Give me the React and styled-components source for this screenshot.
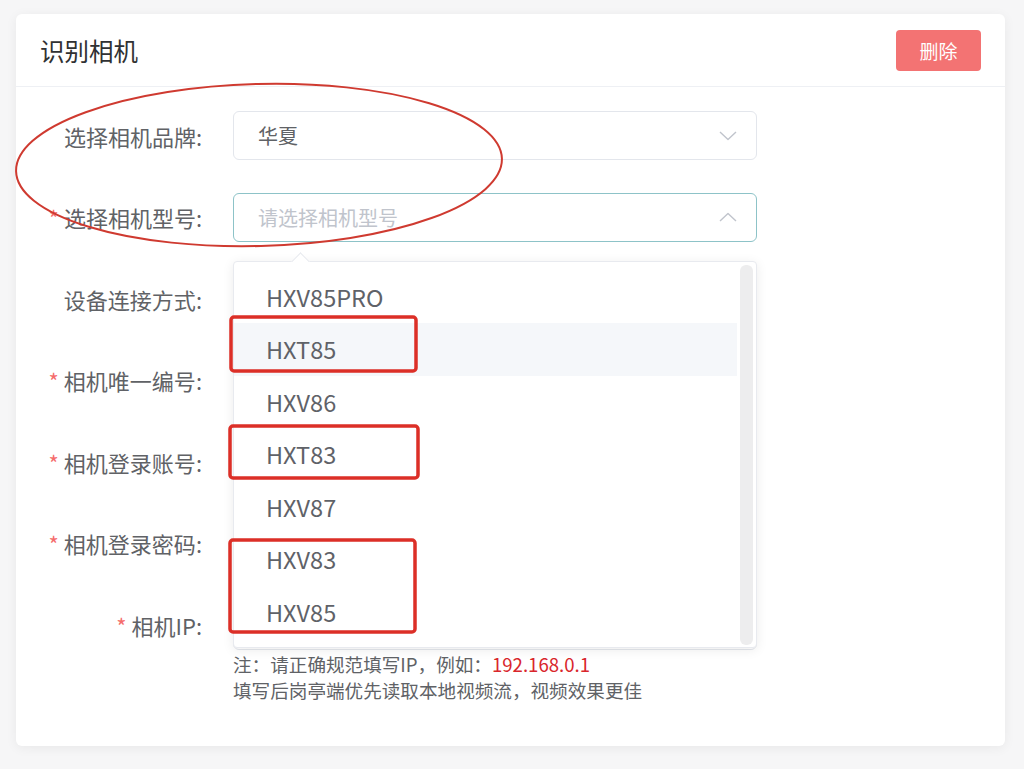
import styled, { createGlobalStyle } from "styled-components";

const GlobalStyle = createGlobalStyle`
  html, body {
    margin: 0;
    padding: 0;
    background: #f6f6f7;
  }
  body {
    font-family: "Noto Sans CJK SC", "Noto Sans", sans-serif;
  }
`;

const models = ["HXV85PRO", "HXT85", "HXV86", "HXT83", "HXV87", "HXV83", "HXV85"];

const rows = [
  { label: "设备连接方式", required: false },
  { label: "相机唯一编号", required: true },
  { label: "相机登录账号", required: true },
  { label: "相机登录密码", required: true },
  { label: "相机IP", required: true },
];

const Chevron = ({ up }) => (
  <svg width="18" height="10" viewBox="0 0 18 10" fill="none">
    <polyline
      points={up ? "1,9 9,1.5 17,9" : "1,1 9,8.5 17,1"}
      stroke="#c0c4cc"
      strokeWidth="1.4"
      strokeLinejoin="round"
    />
  </svg>
);

const App = () => {
  return (
    <Page>
      <GlobalStyle />
      <Card>
        <Header>
          <Title>识别相机</Title>
          <DeleteButton>删除</DeleteButton>
        </Header>
        <Form>
          <Row>
            <Label>选择相机品牌:</Label>
            <Field>
              <SelectBox>
                <Value>华夏</Value>
                <Chevron />
              </SelectBox>
            </Field>
          </Row>
          <Row>
            <Label $required>选择相机型号:</Label>
            <Field>
              <SelectBox $focus>
                <Value $placeholder>请选择相机型号</Value>
                <Chevron up />
              </SelectBox>
              <Dropdown>
                <List>
                  {models.map((m, i) => (
                    <Item key={m} $hover={i === 1}>{m}</Item>
                  ))}
                </List>
                <Scrollbar />
              </Dropdown>
            </Field>
          </Row>
          {rows.map((r) => (
            <Row key={r.label}>
              <Label $required={r.required}>{r.label}:</Label>
              <Field>
                <SelectBox />
              </Field>
            </Row>
          ))}
        </Form>
        <Hint>
          <div>
            注：请正确规范填写IP，例如：<Red>192.168.0.1</Red>
          </div>
          <div>填写后岗亭端优先读取本地视频流，视频效果更佳</div>
        </Hint>
      </Card>
      <Marks width="1024" height="769" viewBox="0 0 1024 769">
        <ellipse
          cx="259"
          cy="165"
          rx="243"
          ry="81"
          transform="rotate(-1.5 259 165)"
          fill="none"
          stroke="#cf3a30"
          strokeWidth="2"
        />
        <rect x="231" y="317" width="185" height="54" rx="3" fill="none" stroke="#dc2f27" strokeWidth="3.5" />
        <rect x="230" y="426" width="188" height="52" rx="3" fill="none" stroke="#dc2f27" strokeWidth="3.5" />
        <rect x="230" y="540" width="185" height="92" rx="3" fill="none" stroke="#dc2f27" strokeWidth="3.5" />
      </Marks>
    </Page>
  );
};

const Page = styled.div`
  position: relative;
  width: 1024px;
  height: 769px;
  overflow: hidden;
  padding: 14px 0 0 16px;
  box-sizing: border-box;
`;

const Card = styled.div`
  width: 989px;
  height: 732px;
  background: #fff;
  border-radius: 6px;
  box-shadow: 0 2px 12px rgba(0, 0, 0, 0.06);
`;

const Header = styled.div`
  height: 72px;
  border-bottom: 1px solid #eef0f4;
  display: flex;
  align-items: center;
  justify-content: space-between;
  padding: 0 24px;
`;

const Title = styled.div`
  font-size: 24.5px;
  color: #303133;
`;

const DeleteButton = styled.button`
  width: 85px;
  height: 41px;
  border: none;
  border-radius: 4px;
  background: #f37373;
  color: #fff;
  font-family: inherit;
  font-size: 19px;
`;

const Form = styled.div`
  display: flex;
  flex-direction: column;
  gap: 32.6px;
  padding-top: 24px;
`;

const Row = styled.div`
  display: flex;
  align-items: center;
  height: 49px;
`;

const Label = styled.div`
  width: 217px;
  flex-shrink: 0;
  box-sizing: border-box;
  padding-right: 31px;
  text-align: right;
  font-size: 22px;
  color: #606266;
  &::before {
    content: ${(p) => (p.$required ? '"*"' : "none")};
    color: #f56c6c;
    margin-right: 5px;
  }
`;

const Field = styled.div`
  position: relative;
  width: 524px;
`;

const SelectBox = styled.div`
  height: 49px;
  box-sizing: border-box;
  border: 1px solid ${(p) => (p.$focus ? "#8dc3c8" : "#e3e6ec")};
  border-radius: 6px;
  display: flex;
  align-items: center;
  justify-content: space-between;
  padding: 0 19px 0 24px;
`;

const Value = styled.span`
  font-size: 20px;
  color: ${(p) => (p.$placeholder ? "#c0c4cc" : "#606266")};
`;

const Dropdown = styled.div`
  position: absolute;
  top: calc(100% + 19px);
  left: 0;
  width: 524px;
  height: 387px;
  box-sizing: border-box;
  background: #fff;
  border: 1px solid #e8eaef;
  border-radius: 4px;
  box-shadow: 0 2px 12px rgba(0, 0, 0, 0.08);
  display: flex;
  z-index: 5;
  &::before {
    content: "";
    position: absolute;
    top: -7px;
    left: 60px;
    width: 12px;
    height: 12px;
    background: #fff;
    border-top: 1px solid #e8eaef;
    border-left: 1px solid #e8eaef;
    transform: rotate(45deg);
  }
`;

const List = styled.div`
  flex: 1;
  padding: 9px 0;
`;

const Item = styled.div`
  height: 52.5px;
  display: flex;
  align-items: center;
  padding-left: 32px;
  font-size: 23.5px;
  color: #5f6268;
  background: ${(p) => (p.$hover ? "#f5f7fa" : "transparent")};
`;

const Scrollbar = styled.div`
  width: 13px;
  margin: 3px 3px 2px 3px;
  border-radius: 6px;
  background: #ededee;
`;

const Hint = styled.div`
  margin-left: 217px;
  padding-top: 1px;
  font-size: 18.6px;
  line-height: 26px;
  color: #606266;
`;

const Red = styled.span`
  color: #d9262c;
`;

const Marks = styled.svg`
  position: absolute;
  top: 0;
  left: 0;
  pointer-events: none;
  z-index: 10;
`;

export default App;
